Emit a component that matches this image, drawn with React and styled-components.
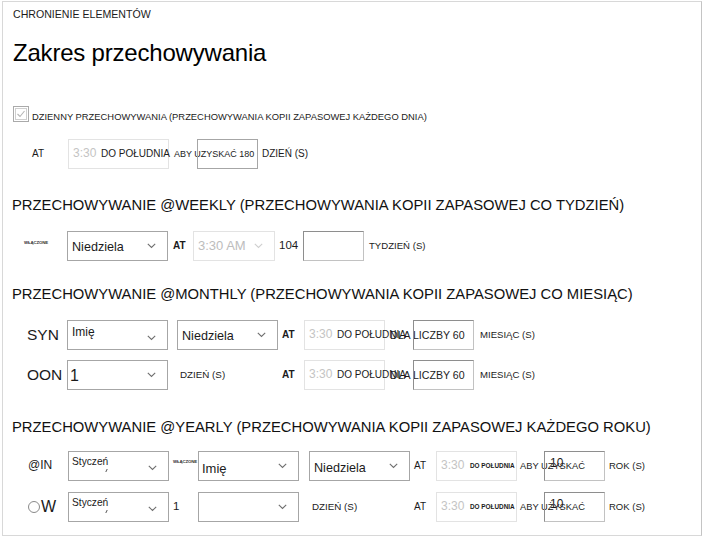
import React from 'react';
import styled, { createGlobalStyle } from 'styled-components';

const GlobalStyle = createGlobalStyle`
  html, body {
    margin: 0;
    padding: 0;
    background: #fff;
  }
  body {
    font-family: "Liberation Sans", Arial, sans-serif;
    color: #1b1b1b;
  }
`;

const Panel = styled.div`
  box-sizing: border-box;
  width: 700px;
  height: 535px;
  margin: 1px 0 0 2px;
  border: 1px solid #d8d8d8;
  border-right-color: #c4c4c4;
  padding: 5px 0 0 9px;
  overflow: hidden;
`;

const Crumb = styled.div`
  font-size: 10.6px;
  line-height: 14px;
  height: 14px;
  margin-left: 1px;
  white-space: nowrap;
`;

const Title = styled.h1`
  margin: 17px 0 0 1px;
  font-size: 24px;
  font-weight: normal;
  letter-spacing: -0.2px;
  line-height: 29px;
  color: #000;
`;

const Heading = styled.h2`
  margin: ${p => p.$top}px 0 0;
  font-size: 14.8px;
  font-weight: normal;
  line-height: 18px;
  white-space: nowrap;
  color: #111;
`;

const CheckRow = styled.div`
  display: flex;
  align-items: flex-end;
  height: 16px;
  margin: 39px 0 0 1px;
`;

const CheckLabel = styled.span`
  margin-left: 3px;
  font-size: 9.4px;
  line-height: 11px;
  white-space: nowrap;
`;

const Row = styled.div`
  display: flex;
  align-items: center;
  height: 30px;
  margin-top: ${p => p.$top}px;
  padding-left: ${p => p.$indent}px;
`;

const Slot = styled.span`
  flex: none;
  width: ${p => (p.$w ? `${p.$w}px` : 'auto')};
  margin-left: ${p => p.$ml || 0}px;
  font-size: ${p => p.$fs || 10}px;
  font-weight: ${p => (p.$bold ? 'bold' : 'normal')};
  white-space: nowrap;
  line-height: 1.15;
`;

const Tiny = styled.span`
  flex: none;
  width: ${p => p.$w}px;
  margin-left: ${p => p.$ml || 0}px;
  align-self: flex-start;
  padding-top: ${p => p.$pt}px;
  font-size: 4.3px;
  font-weight: bold;
  letter-spacing: -0.1px;
  line-height: 5px;
  white-space: nowrap;
  color: #333;
`;

const Box = styled.div`
  box-sizing: border-box;
  flex: none;
  display: flex;
  align-items: ${p => (p.$top ? 'flex-start' : 'center')};
  width: ${p => p.$w}px;
  height: 30px;
  margin-left: ${p => p.$ml || 0}px;
  padding: ${p => (p.$top ? `${p.$top}px` : '0')} 0 0 ${p => (p.$pl != null ? p.$pl : 4)}px;
  border: 1px solid ${p => (p.$faint ? '#e3e3e3' : '#a6a6a6')};
  ${p => p.$input && 'border-color: #8e8e8e #c2c2c2 #c2c2c2 #8e8e8e;'}
  color: ${p => (p.$faint ? '#bdbdbd' : '#1b1b1b')};
  white-space: nowrap;
`;

const Text = styled.span`
  flex: none;
  display: flex;
  flex-direction: column;
  width: ${p => (p.$w ? `${p.$w}px` : 'auto')};
  font-size: ${p => p.$fs}px;
  font-weight: ${p => (p.$bold ? 'bold' : 'normal')};
  color: ${p => (p.$dim ? '#c4c4c4' : p.$ink ? '#1b1b1b' : 'inherit')};
  margin-top: ${p => p.$mt || 0}px;
  line-height: 1.15;
`;

const Mark = styled.span`
  width: 2px;
  height: 3px;
  margin: 1px 0 0 ${p => p.$ml}px;
  border-right: 1px solid #555;
  transform: skewX(-25deg);
`;

const ChevronWrap = styled.span`
  flex: none;
  display: flex;
  margin: 0 11px 0 auto;
  align-self: center;
`;

const Radio = styled.span`
  box-sizing: border-box;
  display: inline-block;
  width: 12px;
  height: 12px;
  border: 1px solid #8a8a8a;
  border-radius: 50%;
  margin-right: 1px;
  vertical-align: -1px;
`;

const Chevron = ({ faint }) => (
  <ChevronWrap>
    <svg width="9" height="6" viewBox="0 0 9 6">
      <polyline
        points="0.8,0.8 4.5,4.5 8.2,0.8"
        fill="none"
        stroke={faint ? '#cfcfcf' : '#6f6f6f'}
        strokeWidth="1.1"
      />
    </svg>
  </ChevronWrap>
);

const CheckIcon = () => (
  <svg width="16" height="16" viewBox="0 0 16 16">
    <rect x="0.5" y="0.5" width="15" height="15" fill="none" stroke="#555" strokeDasharray="1 1" />
    <rect x="2.5" y="2.5" width="11" height="11" fill="#fff" stroke="#cfcfcf" />
    <polyline points="4.5,8 7,10.5 11.5,5" fill="none" stroke="#b5b5b5" strokeWidth="1.1" />
  </svg>
);

const TimeBox = ({ w, small }) => (
  <Box $w={w} $faint>
    <Text $w={small ? 29 : 28} $fs={12} $dim>3:30</Text>
    <Text $fs={small ? 6.4 : 10} $bold={small} $ink>
      DO POŁUDNIA
    </Text>
  </Box>
);

const MonthTail = () => (
  <>
    <TimeBox w={81} />
    <Slot $ml={5} $w={23} $fs={10.6}>DLA LICZBY 60</Slot>
    <Box $w={61} $input />
    <Slot $ml={6} $fs={9.6}>MIESIĄC (S)</Slot>
  </>
);

const YearTail = ({ word, gap }) => (
  <>
    <Slot $ml={gap} $w={22} $fs={10}>AT</Slot>
    <TimeBox w={81} small />
    <Slot $ml={3} $w={24} $fs={9.3}>{word}</Slot>
    <Box $w={61} $input $top={5} $pl={5}>
      <Text $fs={12}>10</Text>
    </Box>
    <Slot $ml={4} $fs={9.5}>ROK (S)</Slot>
  </>
);

const Month = () => (
  <Box $w={101} $top={4} $pl={3}>
    <Text $fs={10.2}>
      Styczeń
      <Mark $ml={32} />
    </Text>
    <Chevron />
  </Box>
);

const App = () => (
  <>
    <GlobalStyle />
    <Panel>
      <Crumb>CHRONIENIE ELEMENTÓW</Crumb>
      <Title>Zakres przechowywania</Title>

      <CheckRow>
        <CheckIcon />
        <CheckLabel>DZIENNY PRZECHOWYWANIA (PRZECHOWYWANIA KOPII ZAPASOWEJ KAŻDEGO DNIA)</CheckLabel>
      </CheckRow>
      <Row $top={17} $indent={20}>
        <Slot $w={36} $fs={10}>AT</Slot>
        <TimeBox w={101} />
        <Slot $ml={5} $w={23} $fs={9}>ABY UZYSKAĆ 180</Slot>
        <Box $w={61} />
        <Slot $ml={4} $fs={10}>DZIEŃ (S)</Slot>
      </Row>

      <Heading $top={27}>PRZECHOWYWANIE @WEEKLY (PRZECHOWYWANIA KOPII ZAPASOWEJ CO TYDZIEŃ)</Heading>
      <Row $top={17} $indent={12}>
        <Tiny $w={43} $pt={9}>WŁĄCZONE</Tiny>
        <Box $w={101}>
          <Text $fs={12.6} $mt={2}>Niedziela</Text>
          <Chevron />
        </Box>
        <Slot $ml={5} $w={20} $fs={10} $bold>AT</Slot>
        <Box $w={82} $faint>
          <Text $fs={13}>3:30 AM</Text>
          <Chevron faint />
        </Box>
        <Slot $ml={4} $w={24} $fs={11.5}>104</Slot>
        <Box $w={61} $input />
        <Slot $ml={5} $fs={9.6}>TYDZIEŃ (S)</Slot>
      </Row>

      <Heading $top={24}>PRZECHOWYWANIE @MONTHLY (PRZECHOWYWANIA KOPII ZAPASOWEJ CO MIESIĄC)</Heading>
      <Row $top={17} $indent={15}>
        <Slot $w={40} $fs={15.5}>SYN</Slot>
        <Box $w={101} $top={5}>
          <Text $fs={12}>Imię</Text>
          <Chevron />
        </Box>
        <Box $ml={9} $w={101}>
          <Text $fs={12.6} $mt={2}>Niedziela</Text>
          <Chevron />
        </Box>
        <Slot $ml={4} $w={22} $fs={10} $bold>AT</Slot>
        <MonthTail />
      </Row>
      <Row $top={10} $indent={15}>
        <Slot $w={40} $fs={15.5}>OON</Slot>
        <Box $w={101} $pl={2}>
          <Text $fs={16} $mt={2}>1</Text>
          <Chevron />
        </Box>
        <Slot $ml={12} $w={102} $fs={9.8}>DZIEŃ (S)</Slot>
        <Slot $w={22} $fs={10} $bold>AT</Slot>
        <MonthTail />
      </Row>

      <Heading $top={28}>PRZECHOWYWANIE @YEARLY (PRZECHOWYWANIA KOPII ZAPASOWEJ KAŻDEGO ROKU)</Heading>
      <Row $top={15} $indent={16}>
        <Slot $w={40} $fs={12}>@IN</Slot>
        <Month />
        <Tiny $ml={4} $w={25} $pt={8}>WŁĄCZONE</Tiny>
        <Box $w={101} $pl={3}>
          <Text $fs={13} $mt={6}>Imię</Text>
          <Chevron />
        </Box>
        <Box $ml={10} $w={101}>
          <Text $fs={12.6} $mt={4}>Niedziela</Text>
          <Chevron />
        </Box>
        <YearTail word="ABY UZYSKAĆ" gap={4} />
      </Row>
      <Row $top={11} $indent={16}>
        <Slot $w={40} $fs={16}>
          <Radio />W
        </Slot>
        <Month />
        <Slot $ml={4} $w={25} $fs={11.5}>1</Slot>
        <Box $w={101}>
          <Chevron />
        </Box>
        <Slot $ml={13} $w={102} $fs={9.8}>DZIEŃ (S)</Slot>
        <YearTail word="ABY UŻYSKAĆ" gap={0} />
      </Row>
    </Panel>
  </>
);

export default App;
